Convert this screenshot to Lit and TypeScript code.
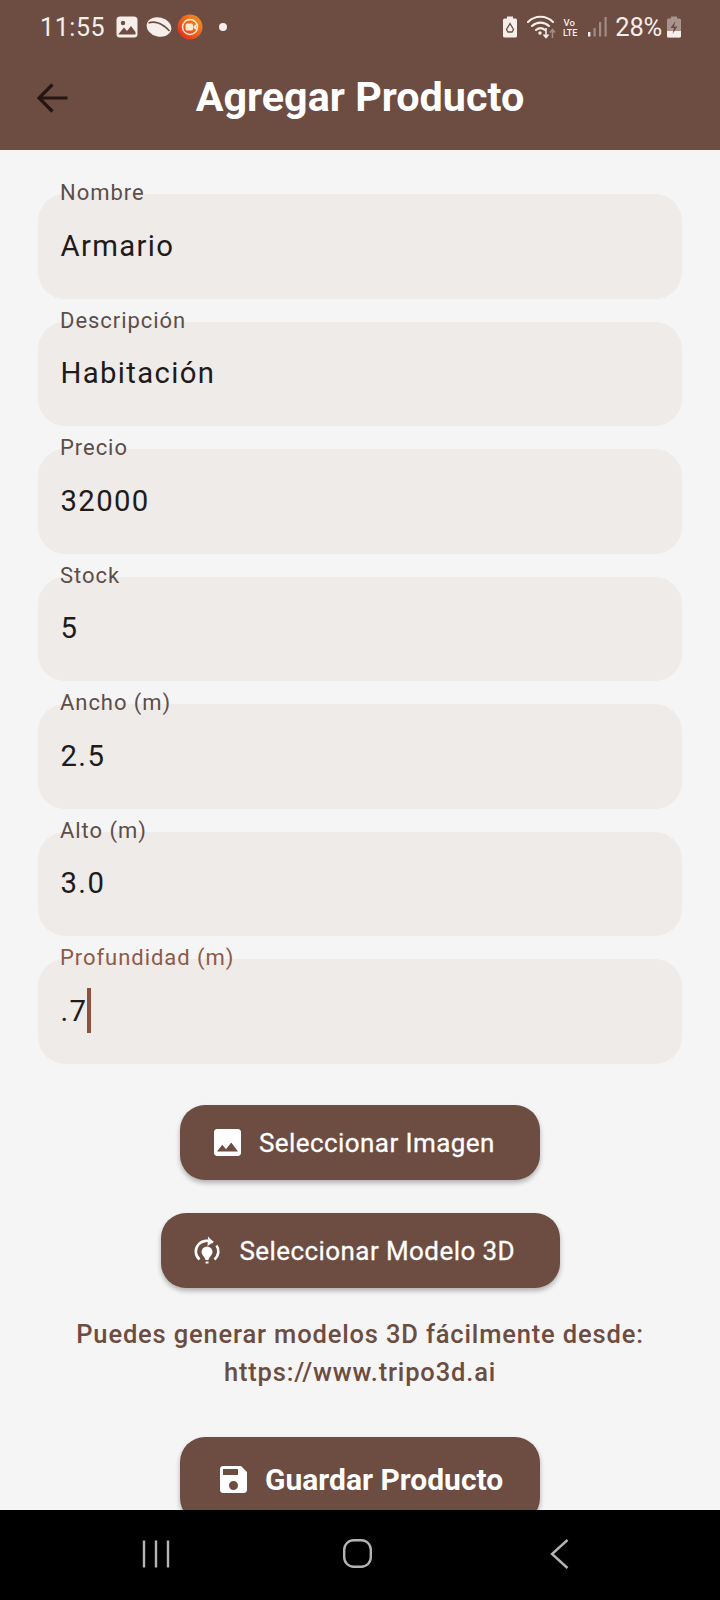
import { LitElement, html, css } from "lit";
import { customElement } from "lit/decorators.js";

const fields = [
  ["Nombre", "Armario"],
  ["Descripción", "Habitación"],
  ["Precio", "32000"],
  ["Stock", "5"],
  ["Ancho (m)", "2.5"],
  ["Alto (m)", "3.0"],
];

@customElement("app-root")
export class AppRoot extends LitElement {
  static styles = css`
    :host { display: block; width: 720px; height: 1600px; font-family: Roboto, "Noto Sans", sans-serif; background: #f5f5f5; }
    .page { width: 720px; height: 1600px; display: flex; flex-direction: column; overflow: hidden; }
    .top { height: 150px; background: #6d4c41; flex: none; display: flex; flex-direction: column; }
    .status { height: 54px; display: flex; align-items: center; padding: 0 39px 0 40px; color: #f5eeeb; }
    .time { font-size: 25px; letter-spacing: 0.6px; width: 76px; flex: none; }
    .status svg { display: block; flex: none; }
    .spacer { flex: 1; }
    .pct { font-size: 25.5px; letter-spacing: -0.2px; margin: 0 5px 0 8px; }
    .ml8 { margin-left: 8px; } .ml5 { margin-left: 5px; } .ml16 { margin-left: 16px; } .ml10 { margin-left: 10px; } .ml6 { margin-left: 6px; } .ml7 { margin-left: 7px; }
    .bar { height: 87px; display: flex; align-items: center; position: relative; padding-left: 37px; }
    .bar svg { position: relative; }
    .title { position: absolute; left: 0; right: 0; top: 0; bottom: 2px; display: flex; align-items: center; justify-content: center; color: #fff; font-size: 41.3px; font-weight: 700; }
    .content { flex: 1; overflow: hidden; min-height: 0; display: flex; flex-direction: column; align-items: center; padding-top: 44px; }
    .fields { align-self: stretch; display: flex; flex-direction: column; gap: 23px; padding: 0 38px 0 37.5px; }
    .field { position: relative; height: 104.5px; background: #efebe9; border-radius: 27px; display: flex; align-items: center; padding: 0 23px; box-sizing: border-box; }
    .label { position: absolute; left: 22.5px; top: -13px; font-size: 22px; line-height: 24px; letter-spacing: 0.95px; color: #5d4e4a; }
    .label.focus { color: #8d5a48; }
    .value { font-size: 29.3px; letter-spacing: 1.35px; color: #1e1b1a; margin-top: -1px; display: flex; align-items: center; }
    .caret { width: 4px; height: 45px; background: #8d5140; margin-left: 0; }
    .btn { display: flex; align-items: center; background: #6d4c41; color: #fff; border-radius: 25px; height: 75px; box-shadow: 0 3px 5px rgba(0,0,0,.28); flex: none; box-sizing: border-box; }
    .btn svg { flex: none; display: block; }
    .btn-text { margin-top: 1px; }
    .b1 { margin-top: 41px; width: 360px; padding-left: 34px; font-size: 26px; letter-spacing: 0.42px; gap: 18px; -webkit-text-stroke: 0.3px #fff; }
    .b2 { margin-top: 33px; width: 399px; padding-left: 32px; font-size: 26px; letter-spacing: 0.42px; gap: 19px; -webkit-text-stroke: 0.3px #fff; }
    .note { margin-top: 27px; width: 644px; text-align: center; color: #6d4c41; font-size: 25.5px; line-height: 38.5px; font-weight: 500; letter-spacing: 0.84px; }
    .b3 { margin-top: 45px; width: 360px; height: 86px; padding-left: 40px; font-size: 30px; font-weight: 700; gap: 18px; }
    .nav { height: 90px; background: #000; flex: none; display: flex; align-items: center; }
    .nav svg { display: block; }
    .navrow { width: 100%; display: flex; justify-content: space-between; margin-top: -2px; box-sizing: border-box; padding-left: 142px; padding-right: 150px; }
    .home { margin-right: 5px; }
  `;

  render() {
    return html`<div class="page">
      <div class="top">
        <div class="status">
          <span class="time">11:55</span>
          <svg width="22" height="22" viewBox="0 0 22 22"><rect x="0.5" y="0.5" width="21" height="21" rx="3.5" fill="#f5eeeb"/><circle cx="7" cy="7" r="2.2" fill="#6d4c41"/><path d="M2.500 18 L8 11.500 L11 15 L15 10 L19.500 16 V18.500 H2.500Z" fill="#6d4c41"/></svg>
          <svg class="ml8" width="26" height="22" viewBox="0 0 26 22"><ellipse cx="13" cy="11" rx="12.500" ry="9.500" transform="rotate(14 13 11)" fill="#f5eeeb"/><path d="M2.500 7C8 4.500 16 7 23.500 15" fill="none" stroke="#6d4c41" stroke-width="1.700"/></svg>
          <svg class="ml5" width="26" height="26" viewBox="0 0 26 26"><defs><linearGradient id="g" x1="0" y1="1" x2="1" y2="0"><stop offset="0" stop-color="#e8201c"/><stop offset="1" stop-color="#f0a020"/></linearGradient></defs><circle cx="13" cy="13" r="12.500" fill="url(#g)"/><circle cx="13" cy="13" r="7.500" fill="none" stroke="#fde8d0" stroke-width="1.600"/><rect x="8.500" y="9.500" width="7.500" height="7" rx="1.500" fill="#fde8d0"/><path d="M16.500 12 L19.500 10 V16 L16.500 14Z" fill="#fde8d0"/></svg>
          <svg class="ml16" width="8" height="8" viewBox="0 0 8 8"><circle cx="4" cy="4" r="4" fill="#f5eeeb"/></svg>
          <span class="spacer"></span>
          <svg width="14" height="22" viewBox="0 0 14 22"><path d="M4 0.500H10V2.500H12.500A1.500 1.500 0 0 1 14 4V20A1.500 1.500 0 0 1 12.500 21.500H1.500A1.500 1.500 0 0 1 0 20V4A1.500 1.500 0 0 1 1.500 2.500H4Z" fill="#f5eeeb"/><path d="M7 7.500 L10.500 13.500 L9 16 H5 L3.500 13.500 Z" fill="none" stroke="#6d4c41" stroke-width="1.300"/></svg>
          <svg class="ml10" width="30" height="24" viewBox="0 0 30 24"><path d="M1 7 C8 0 19 0 26 7 M5 11 C10 6.500 17 6.500 22 11 M9 15 C12 12.500 15 12.500 18 15" fill="none" stroke="#f5eeeb" stroke-width="2.100" stroke-linecap="round"/><circle cx="13" cy="18" r="1.700" fill="#f5eeeb"/><path d="M19 13 V22 M16.500 19.500 L19 22.500 L21.500 19.500" fill="none" stroke="#f5eeeb" stroke-width="1.600"/><path d="M25.500 23 V15 M23 17.500 L25.500 14.500 L28 17.500" fill="none" stroke="#a08c85" stroke-width="1.600"/></svg>
          <svg class="ml6" width="18" height="20" viewBox="0 0 18 20"><text x="0.500" y="8.500" font-family="Roboto" font-size="9.500" font-weight="500" fill="#f5eeeb">Vo</text><text x="0" y="18.500" font-family="Roboto" font-size="9" font-weight="500" fill="#f5eeeb">LTE</text></svg>
          <svg class="ml7" width="19" height="20" viewBox="0 0 19 20"><rect x="0" y="15" width="2.400" height="4.500" fill="#f5eeeb"/><rect x="5.500" y="11" width="2.200" height="8.500" fill="#a08c85"/><rect x="11" y="5" width="2.200" height="14.500" fill="#a08c85"/><rect x="16.500" y="0" width="2.200" height="19.500" fill="#a08c85"/></svg>
          <span class="pct">28%</span>
          <svg width="14" height="22" viewBox="0 0 14 22"><path d="M4 0.500H10V2.500H12.500A1.500 1.500 0 0 1 14 4V20A1.500 1.500 0 0 1 12.500 21.500H1.500A1.500 1.500 0 0 1 0 20V4A1.500 1.500 0 0 1 1.500 2.500H4Z" fill="#a9948d"/><path d="M0 15H14V20A1.500 1.500 0 0 1 12.500 21.500H1.500A1.500 1.500 0 0 1 0 20Z" fill="#f5eeeb"/><path d="M8.500 5 L3.500 12 H7 L5.500 18 L10.500 10.500 H7Z" fill="#6d4c41"/></svg>
        </div>
        <div class="bar">
          <div class="title">Agregar Producto</div>
          <svg width="32" height="30" viewBox="0 0 32 30"><path d="M30.500 15H2.500M15.500 1.500L2 15L15.500 28.500" fill="none" stroke="#241713" stroke-width="3.200"/></svg>
        </div>
      </div>
      <div class="content">
        <div class="fields">
          ${fields.map(([l, v]) => html`<div class="field"><span class="label">${l}</span><span class="value">${v}</span></div>`)}
          <div class="field"><span class="label focus">Profundidad (m)</span><span class="value">.7<span class="caret"></span></span></div>
        </div>
        <div class="btn b1">
          <svg width="27" height="27" viewBox="3 3 18 18"><path fill="#fff" d="M21 19V5c0-1.100-.9-2-2-2H5c-1.100 0-2 .9-2 2v14c0 1.100.9 2 2 2h14c1.100 0 2-.9 2-2zM8.500 13.500l2.500 3.010L14.500 12l4.500 6H5l3.500-4.500z"/></svg>
          <span class="btn-text">Seleccionar Imagen</span>
        </div>
        <div class="btn b2">
          <svg width="28" height="30" viewBox="0 0 28 30"><path d="M6.500 24.500C2 20.500 1.500 14 5.500 9.500S16 5 20 7.500M21.500 24.500C26 20.500 26.500 14.500 23.500 10.500" fill="none" stroke="#fff" stroke-width="2.600"/><path d="M15 1.500L20.500 7L14.500 11Z" fill="#fff"/><path d="M14 11.500a5.500 5.500 0 0 1 5.500 5.500c0 3-3.500 5-4 8h-3c-.5-3-4-5-4-8a5.500 5.500 0 0 1 5.500-5.500z" fill="#fff"/><rect x="12.500" y="26.500" width="3" height="2" fill="#fff"/></svg>
          <span class="btn-text">Seleccionar Modelo 3D</span>
        </div>
        <div class="note">Puedes generar modelos 3D fácilmente desde:<br />https://www.tripo3d.ai</div>
        <div class="btn b3">
          <svg width="27" height="27" viewBox="3 3 18 18"><path fill="#fff" d="M17 3H5c-1.110 0-2 .9-2 2v14c0 1.100.89 2 2 2h14c1.100 0 2-.9 2-2V7l-4-4zm-5 16c-1.660 0-3-1.340-3-3s1.340-3 3-3 3 1.340 3 3-1.340 3-3 3zm3-10H5V5h10v4z"/></svg>
          <span>Guardar Producto</span>
        </div>
      </div>
      <div class="nav">
        <div class="navrow">
          <svg width="28" height="30" viewBox="0 0 28 30"><path d="M2 1.500V28.500M14 1.500V28.500M26 1.500V28.500" stroke="#b4b4b4" stroke-width="2.400" fill="none"/></svg>
          <svg class="home" width="29" height="29" viewBox="0 0 29 29"><rect x="1.200" y="1.200" width="26.600" height="26.600" rx="9.500" fill="none" stroke="#b4b4b4" stroke-width="2.400"/></svg>
          <svg width="20" height="30" viewBox="0 0 20 30"><path d="M17.500 1L2 15L17.500 29" fill="none" stroke="#b4b4b4" stroke-width="2.400"/></svg>
        </div>
      </div>
    </div>`;
  }
}
